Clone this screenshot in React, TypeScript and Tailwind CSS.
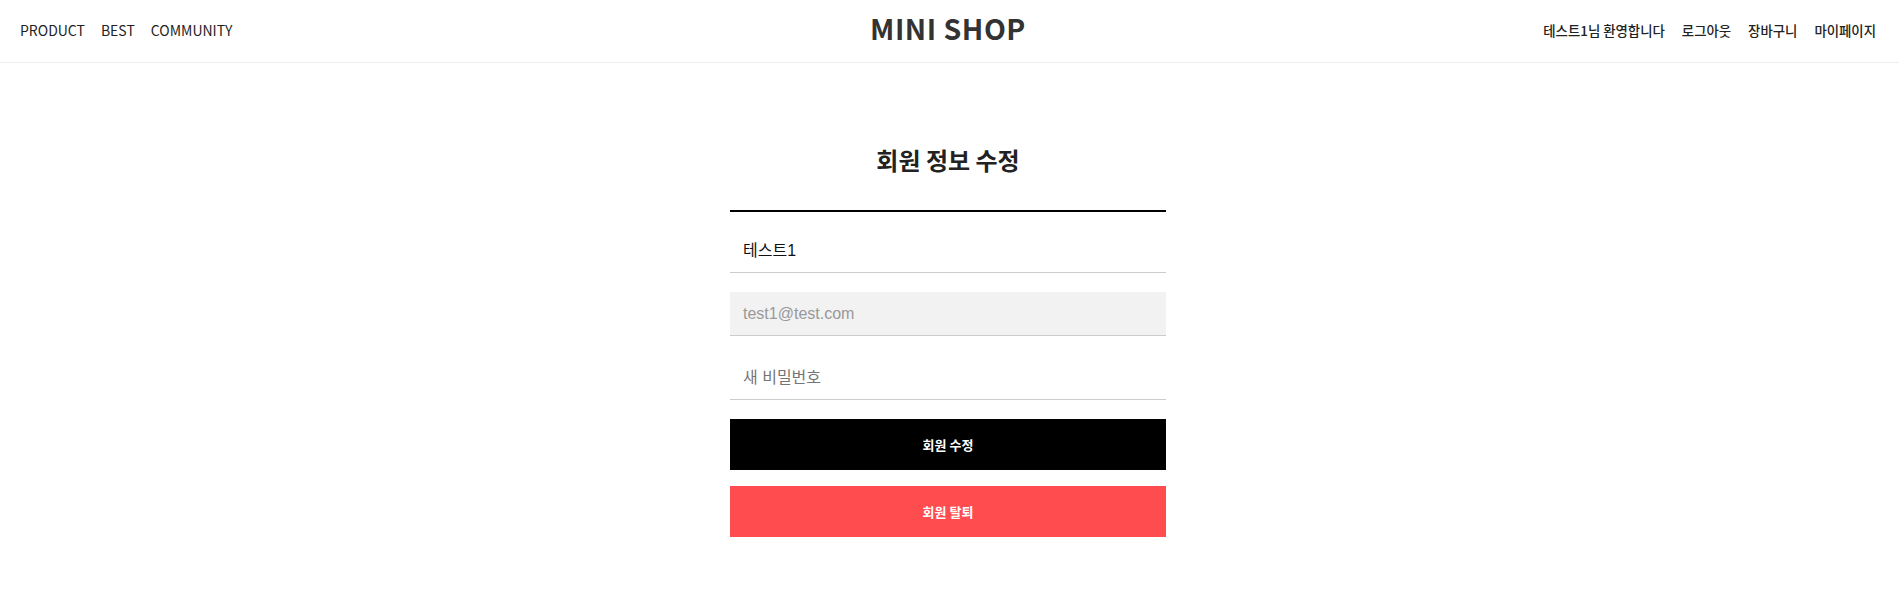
import React from "react";

const sans = '"Noto Sans CJK KR", "Noto Sans", sans-serif';
const formFont = '"Liberation Sans", "Noto Sans CJK KR", sans-serif';

export default function App() {
  return (
    <div className="min-h-screen bg-white" style={{ fontFamily: sans }}>
      <header className="grid h-[63px] grid-cols-3 items-center border-b border-[#eeeeee] pb-[2px] pl-5 pr-[23px]">
        <nav className="flex items-center gap-4 text-[14px] text-[#1f1f24]">
          <span>PRODUCT</span>
          <span>BEST</span>
          <span>COMMUNITY</span>
        </nav>
        <div className="flex justify-center pb-[3px]">
          <span className="text-[28.5px] font-bold leading-none tracking-[0.5px] text-[#333333]">MINI SHOP</span>
        </div>
        <nav className="flex items-center justify-end gap-[17px] text-[13.4px] font-medium text-[#222222]">
          <span>테스트1님 환영합니다</span>
          <span>로그아웃</span>
          <span>장바구니</span>
          <span>마이페이지</span>
        </nav>
      </header>

      <div className="flex justify-center pr-[3px]">
        <main className="w-[436px] pt-[80px]" style={{ fontFamily: formFont }}>
          <h2 className="h-[34px] text-center text-[24px] font-bold leading-[34px] text-[#222222]" style={{ fontFamily: sans }}>
            회원 정보 수정
          </h2>
          <div className="mt-[33px] border-t-2 border-black" />
          <div className="mt-[17px] flex h-11 items-center border-b border-[#cccccc] px-[13px] text-[16px] text-[#111111]">
            테스트1
          </div>
          <div className="mt-[19px] flex h-11 items-center border-b border-[#cccccc] bg-[#f2f2f2] px-[13px] text-[16px] text-[#999999]">
            test1@test.com
          </div>
          <div className="mt-5 flex h-11 items-center border-b border-[#cccccc] px-[13px] text-[16px] text-[#757575]">
            새 비밀번호
          </div>
          <button className="mt-[19px] flex h-[51px] w-full items-center justify-center bg-black text-[13px] font-bold text-white" style={{ fontFamily: sans }}>
            회원 수정
          </button>
          <button className="mt-4 flex h-[51px] w-full items-center justify-center bg-[#ff4d4f] text-[13px] font-bold text-white" style={{ fontFamily: sans }}>
            회원 탈퇴
          </button>
        </main>
      </div>
    </div>
  );
}
